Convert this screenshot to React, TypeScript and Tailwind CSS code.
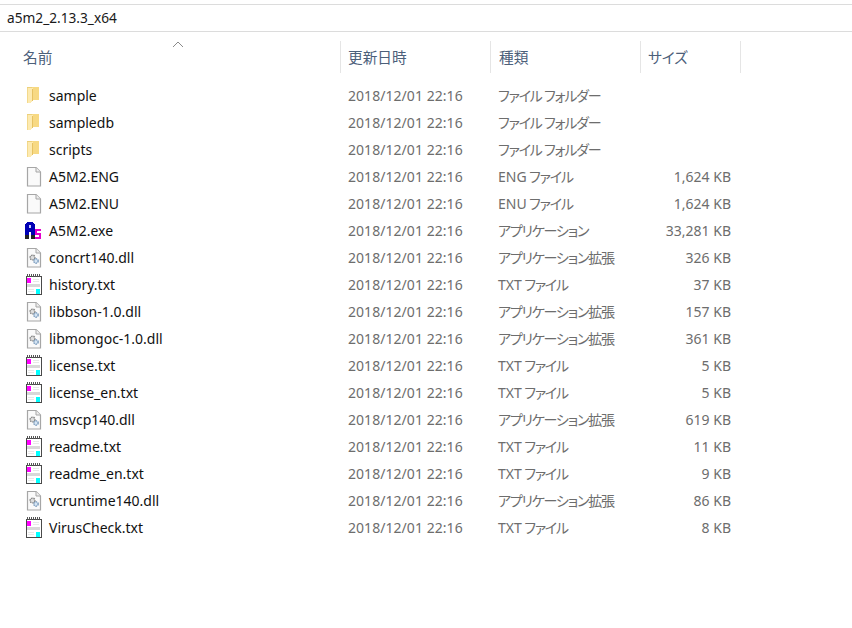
const rows: [string, string, string, string, string][] = [
  ["folder", "sample", "", "ファイル フォルダー", ""],
  ["folder", "sampledb", "", "ファイル フォルダー", ""],
  ["folder", "scripts", "", "ファイル フォルダー", ""],
  ["blank", "A5M2.ENG", "ENG", " ファイル", "1,624 KB"],
  ["blank", "A5M2.ENU", "ENU", " ファイル", "1,624 KB"],
  ["exe", "A5M2.exe", "", "アプリケーション", "33,281 KB"],
  ["dll", "concrt140.dll", "", "アプリケーション拡張", "326 KB"],
  ["txt", "history.txt", "TXT", " ファイル", "37 KB"],
  ["dll", "libbson-1.0.dll", "", "アプリケーション拡張", "157 KB"],
  ["dll", "libmongoc-1.0.dll", "", "アプリケーション拡張", "361 KB"],
  ["txt", "license.txt", "TXT", " ファイル", "5 KB"],
  ["txt", "license_en.txt", "TXT", " ファイル", "5 KB"],
  ["dll", "msvcp140.dll", "", "アプリケーション拡張", "619 KB"],
  ["txt", "readme.txt", "TXT", " ファイル", "11 KB"],
  ["txt", "readme_en.txt", "TXT", " ファイル", "9 KB"],
  ["dll", "vcruntime140.dll", "", "アプリケーション拡張", "86 KB"],
  ["txt", "VirusCheck.txt", "TXT", " ファイル", "8 KB"],
];

function Icon({ kind }: { kind: string }) {
  if (kind === "folder")
    return (
      <svg width="20" height="20" viewBox="0 0 20 20" shapeRendering="crispEdges">
        <path d="M8 1h7v13H8z" fill="#f7d983" />
        <path d="M3 1h5v1l1 1v12l-3 2H3z" fill="#fdeab0" />
        <path d="M8 3h1v12H8z" fill="#e6c263" />
        <path d="M3 1h5v1H3z" fill="#ecd07c" />
        <path d="M3 2h1v15H3z" fill="#f3d98c" />
      </svg>
    );
  if (kind === "exe")
    return (
      <svg width="20" height="20" viewBox="0 0 20 20" shapeRendering="crispEdges">
        <path d="M1 13h4v5H1zM7 13h4v5H7z" fill="#222" />
        <path d="M1 14V4l2-3h6l2 3v10H7v-3H5v3z" fill="#0000b4" />
        <path d="M5 4h2v3H5z" fill="#c8c8ff" />
        <path d="M11 8h6v2h-4v2h4v6h-6v-2h4v-2h-4z" fill="#e400cc" />
      </svg>
    );
  if (kind === "txt")
    return (
      <svg width="18" height="21" viewBox="0 0 18 21" shapeRendering="crispEdges">
        <path d="M.5 2.5h15v18H.5z" transform="translate(0.5 0)" fill="#fff" stroke="#4a4a4a" />
        <path d="M2 0h1v3H2zM4 0h1v3H4zM6 0h1v3H6zM8 0h1v3H8zM10 0h1v3h-1zM12 0h1v3h-1zM14 0h1v3h-1z" fill="#555" />
        <path d="M2 4h4v5H2z" fill="#ff00ff" />
        <path d="M11 15h4v5h-4z" fill="#00ffff" />
        <path d="M2 10h13v3H2z" fill="#d8d8d8" />
        <path d="M8 5h6v1H8zM8 7h6v1H8zM3 15h6v1H3zM3 17h6v1H3z" fill="#e8e8e8" />
      </svg>
    );
  return (
    <svg width="20" height="20" viewBox="0 0 20 20">
      <path d="M3.5 .5h8.5l4.5 4.5v14h-13z" fill="#fafafa" stroke="#a6a6a6" strokeWidth="1.2" />
      <path d="M12 .5v4.5h4.5" fill="#eeeeee" stroke="#a6a6a6" />
      {kind === "dll" && (
        <>
          <circle cx="8.5" cy="9.5" r="2.4" fill="#dedede" stroke="#858585" strokeWidth="1.4" strokeDasharray="1.5 .7" />
          <circle cx="12" cy="13" r="2.2" fill="#d6e5f3" stroke="#7c9cbd" strokeWidth="1.4" strokeDasharray="1.5 .7" />
        </>
      )}
    </svg>
  );
}

const cols = "grid grid-cols-[341px_150px_150px_100px]";

export default function App() {
  return (
    <div className="w-[852px] h-[628px] bg-white overflow-hidden text-[14px] font-['Noto_Sans','Noto_Sans_CJK_JP',sans-serif]">
      <div className="h-[4px]" />
      <div className="h-[28px] border-y border-[#dcdcdc] pl-[7px] flex items-center text-[13.7px] text-[#1a1a1a]">a5m2_2.13.3_x64</div>
      <div className={`${cols} h-[32px] mt-[9px] text-[14.67px] text-[#4c607a] [font-feature-settings:'palt']`}>
        <div className="relative border-r border-[#e5e5e5] pl-[23px] flex items-center">
          名前
          <svg className="absolute left-[172px] top-[0px]" width="12" height="7" viewBox="0 0 12 7" fill="none" stroke="#8a8a8a">
            <path d="M1 6l5-5 5 5" />
          </svg>
        </div>
        <div className="border-r border-[#e5e5e5] pl-[7px] flex items-center">更新日時</div>
        <div className="border-r border-[#e5e5e5] pl-[8px] flex items-center">種類</div>
        <div className="border-r border-[#e5e5e5] pl-[7px] flex items-center">サイズ</div>
      </div>
      <div className="mt-[9px]">
        {rows.map(([kind, name, prefix, type, size]) => (
          <div key={name} className={`${cols} h-[27px] items-center text-[#6d6d6d]`}>
            <div className="flex items-center text-[#111] pl-[24px] gap-[5px]">
              <span className="w-[20px] h-[20px] flex items-center justify-center"><Icon kind={kind} /></span>
              {name}
            </div>
            <div className="pl-[7px] tracking-[0.05px]">2018/12/01 22:16</div>
            <div className="pl-[7px] [font-feature-settings:'palt'] whitespace-pre">
              {prefix}
              <span className="tracking-[-1.2px]">{type}</span>
            </div>
            <div className="text-right pr-[10px]">{size}</div>
          </div>
        ))}
      </div>
    </div>
  );
}
